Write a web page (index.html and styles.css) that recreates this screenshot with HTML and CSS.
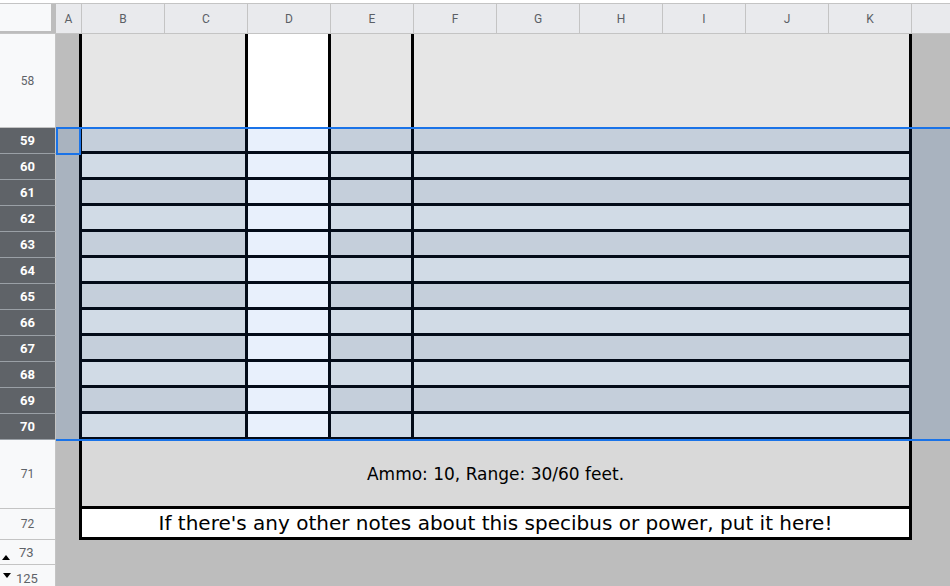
FILE: index.html
```html
<!DOCTYPE html>
<html>
<head>
<meta charset="utf-8">
<link rel="stylesheet" href="styles.css">
</head>
<body>
<div class="sheet">
  <div class="colhead">
    <div class="corner"></div>
    <div class="ch cha">A</div>
    <div class="ch">B</div>
    <div class="ch">C</div>
    <div class="ch">D</div>
    <div class="ch">E</div>
    <div class="ch">F</div>
    <div class="ch">G</div>
    <div class="ch">H</div>
    <div class="ch">I</div>
    <div class="ch">J</div>
    <div class="ch">K</div>
    <div class="ch chrest"></div>
  </div>

  <div class="row r58">
    <div class="rh">58</div>
    <div class="ca"></div>
    <div class="c bc"></div>
    <div class="c d"></div>
    <div class="c e"></div>
    <div class="c fk"></div>
    <div class="cr"></div>
  </div>

  <div class="row sel odd"><div class="rh">59</div><div class="ca"></div><div class="c bc"></div><div class="c d"></div><div class="c e"></div><div class="c fk"></div><div class="cr"></div></div>
  <div class="row sel even"><div class="rh">60</div><div class="ca"></div><div class="c bc"></div><div class="c d"></div><div class="c e"></div><div class="c fk"></div><div class="cr"></div></div>
  <div class="row sel odd"><div class="rh">61</div><div class="ca"></div><div class="c bc"></div><div class="c d"></div><div class="c e"></div><div class="c fk"></div><div class="cr"></div></div>
  <div class="row sel even"><div class="rh">62</div><div class="ca"></div><div class="c bc"></div><div class="c d"></div><div class="c e"></div><div class="c fk"></div><div class="cr"></div></div>
  <div class="row sel odd"><div class="rh">63</div><div class="ca"></div><div class="c bc"></div><div class="c d"></div><div class="c e"></div><div class="c fk"></div><div class="cr"></div></div>
  <div class="row sel even"><div class="rh">64</div><div class="ca"></div><div class="c bc"></div><div class="c d"></div><div class="c e"></div><div class="c fk"></div><div class="cr"></div></div>
  <div class="row sel odd"><div class="rh">65</div><div class="ca"></div><div class="c bc"></div><div class="c d"></div><div class="c e"></div><div class="c fk"></div><div class="cr"></div></div>
  <div class="row sel even"><div class="rh">66</div><div class="ca"></div><div class="c bc"></div><div class="c d"></div><div class="c e"></div><div class="c fk"></div><div class="cr"></div></div>
  <div class="row sel odd"><div class="rh">67</div><div class="ca"></div><div class="c bc"></div><div class="c d"></div><div class="c e"></div><div class="c fk"></div><div class="cr"></div></div>
  <div class="row sel even"><div class="rh">68</div><div class="ca"></div><div class="c bc"></div><div class="c d"></div><div class="c e"></div><div class="c fk"></div><div class="cr"></div></div>
  <div class="row sel odd"><div class="rh">69</div><div class="ca"></div><div class="c bc"></div><div class="c d"></div><div class="c e"></div><div class="c fk"></div><div class="cr"></div></div>
  <div class="row sel even"><div class="rh">70</div><div class="ca"></div><div class="c bc"></div><div class="c d"></div><div class="c e"></div><div class="c fk"></div><div class="cr"></div></div>

  <div class="row r71">
    <div class="rh">71</div>
    <div class="ca"></div>
    <div class="merged ammo">Ammo: 10, Range: 30/60 feet.</div>
    <div class="cr"></div>
  </div>
  <div class="row r72">
    <div class="rh">72</div>
    <div class="ca"></div>
    <div class="merged notes">If there's any other notes about this specibus or power, put it here!</div>
    <div class="cr"></div>
  </div>
  <div class="row r73">
    <div class="rh rh-grp">
      <svg class="tri tri-up" width="8" height="5" viewBox="0 0 8 5"><path d="M0 5 L4 0 L8 5 Z" fill="#000"/></svg>
      <span class="grpnum">73</span>
    </div>
    <div class="fill"></div>
  </div>
  <div class="row r125">
    <div class="rh rh-grp rh-down">
      <svg class="tri tri-down" width="8" height="5" viewBox="0 0 8 5"><path d="M0 0 L8 0 L4 5 Z" fill="#000"/></svg>
      <span class="grpnum">125</span>
    </div>
    <div class="fill"></div>
  </div>

  <div class="selection"></div>
  <div class="active-cell"></div>
</div>
</body>
</html>
```

FILE: styles.css
```css
* { box-sizing: border-box; }
html, body { margin: 0; padding: 0; background: #ffffff; }
body { width: 950px; height: 586px; overflow: hidden; }

.sheet {
  position: relative;
  padding-top: 3px;
  font-family: Roboto, "Liberation Sans", Arial, sans-serif;
}

/* column header */
.colhead {
  display: flex;
  height: 31px;
  border-top: 1px solid #c4c4c4;
  border-bottom: 1px solid #c4c4c4;
  background: #e9eaed;
}
.corner {
  width: 56px;
  background: #f8f9fa;
  border-right: 5px solid #bdbdbd;
  border-bottom: 2px solid #bdbdbd;
}
.ch {
  width: 83px;
  border-right: 1px solid #c4c4c4;
  display: flex;
  align-items: center;
  justify-content: center;
  font-size: 12px;
  color: #5b5f66;
}
.cha { width: 26px; }
.chrest { flex: 1; border-right: none; }

/* rows */
.row { display: flex; }
.rh {
  width: 56px;
  flex: none;
  background: #f8f9fa;
  border-right: 1px solid #c4c4c4;
  border-bottom: 1px solid #c4c4c4;
  display: flex;
  align-items: center;
  justify-content: center;
  font-size: 12px;
  color: #5f6368;
}
.ca { width: 23px; flex: none; background: #bdbdbd; }
.cr { flex: 1; background: #bdbdbd; }
.c { flex: none; }
.bc {
  width: 169px;
  border-left: 3px solid #000;
  border-right: 3px solid #000;
}
.d { width: 80px; }
.e {
  width: 86px;
  border-left: 3px solid #000;
  border-right: 3px solid #000;
}
.fk {
  width: 498px;
  border-right: 3px solid #000;
}

.r58 { height: 94px; }
.r58 .bc, .r58 .e, .r58 .fk { background: #e6e6e6; }
.r58 .d { background: #ffffff; }
.r58 .c { border-bottom: 1px solid #000; }

.sel { height: 26px; }
.sel .rh {
  background: #5f6368;
  color: #ffffff;
  font-weight: bold;
  font-size: 13px;
  border-bottom-color: #9aa0a6;
}
.sel .ca, .sel .cr { background: #a9b3bf; }
.sel .c { border-color: #030b18; border-bottom: 3px solid #030b18; }
.sel.odd .bc, .sel.odd .e, .sel.odd .fk { background: #c5cfdb; }
.sel.even .bc, .sel.even .e, .sel.even .fk { background: #d1dbe6; }
.sel .d { background: #e8f0fc; }

.merged {
  width: 833px;
  flex: none;
  border-left: 3px solid #000;
  border-right: 3px solid #000;
  border-bottom: 3px solid #000;
  display: flex;
  align-items: center;
  justify-content: center;
  font-family: "DejaVu Sans", Verdana, sans-serif;
  color: #000;
  white-space: nowrap;
}
.r71 { height: 69px; }
.ammo { background: #d9d9d9; font-size: 17px; padding-top: 2px; }
.r72 { height: 31px; }
.notes { background: #ffffff; font-size: 20px; }

.r73 { height: 25px; }
.r125 { height: 25px; }
.fill { flex: 1; background: #bdbdbd; }
.rh-grp {
  justify-content: flex-start;
  padding-left: 2px;
  font-size: 13px;
}
.grpnum { line-height: 1; }
.r73 .rh-grp { align-items: flex-start; padding-top: 6px; }
.tri-up { margin-top: 9px; margin-right: 9px; }
.rh-down { align-items: flex-start; padding-top: 7px; padding-left: 3px; }
.tri-down { margin-top: 1px; margin-right: 5px; }

/* selection overlays */
.selection {
  position: absolute;
  left: 56px;
  right: 0;
  top: 127px;
  height: 314px;
  border-top: 2px solid #1a73e8;
  border-bottom: 2px solid #1a73e8;
  pointer-events: none;
}
.active-cell {
  position: absolute;
  left: 56px;
  top: 127px;
  width: 25px;
  height: 28px;
  border: 2px solid #1a73e8;
  pointer-events: none;
}
```
